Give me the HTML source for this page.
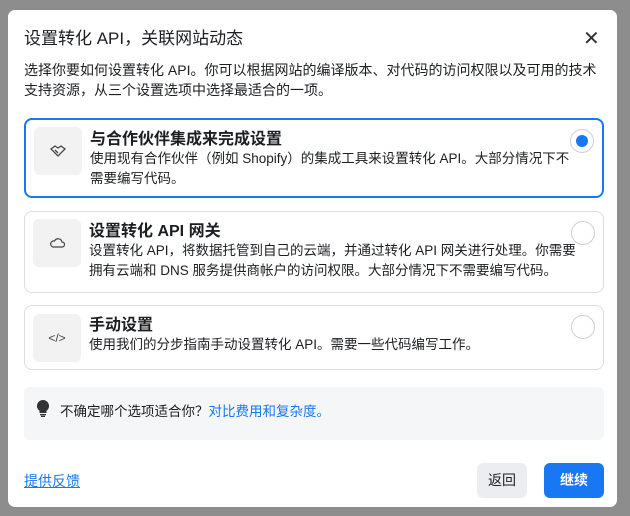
<!DOCTYPE html>
<html><head><meta charset="utf-8"><style>
*{margin:0;padding:0;box-sizing:border-box}
body{width:630px;height:516px;background:#8d8d8d;font-family:"Liberation Sans","Noto Sans CJK SC",sans-serif;color:#1c1e21;position:relative;overflow:hidden}
.m{position:absolute;left:8px;top:10px;width:609px;height:497px;background:#fff;border-radius:7px}
.t{position:absolute;left:24px;top:24px;font-size:17px;color:#1c1e21}
.x{position:absolute;left:583px;top:26px;font-size:20px;color:#333}
.d{position:absolute;left:24px;top:60px;width:580px;font-size:14px;line-height:20px;color:#1c1e21}
.c{position:absolute;left:24px;width:580px;border:1px solid #dadde1;border-radius:8px;background:#fff}
.c.s{border:2px solid #1877f2}
.ib{position:absolute;left:8px;top:7px;width:48px;height:48px;background:#f2f2f2;border-radius:6px;display:flex;align-items:center;justify-content:center}
.ct{position:absolute;left:64px;top:5px;font-size:16px;font-weight:bold}
.cd{position:absolute;left:64px;top:29px;width:496px;font-size:13.5px;line-height:20px}
.r{position:absolute;right:8px;top:9px;width:24px;height:24px;border:1px solid #ccd0d5;border-radius:50%}
.r.on::after{content:"";position:absolute;left:5px;top:5px;width:12px;height:12px;border-radius:50%;background:#1877f2}
.tip{position:absolute;left:24px;top:387px;width:580px;height:53px;background:#f5f6f7;border-radius:6px;font-size:13.5px;padding:13px 0 0 36px}
.tip a{color:#1877f2}
.fb{position:absolute;left:24px;top:471px;font-size:14px;color:#1877f2;text-decoration:underline}
.b1{position:absolute;left:477px;top:463px;width:50px;height:35px;background:#ebedf0;border-radius:6px;font-size:14px;text-align:center;line-height:35px}
.b2{position:absolute;left:544px;top:463px;width:60px;height:35px;background:#1877f2;border-radius:6px;font-size:14px;color:#fff;text-align:center;line-height:35px;font-weight:bold}
</style></head><body>
<div class="m"></div>
<div class="t">设置转化 API，关联网站动态</div>
<div class="x">✕</div>
<div class="d">选择你要如何设置转化 API。你可以根据网站的编译版本、对代码的访问权限以及可用的技术支持资源，从三个设置选项中选择最适合的一项。</div>
<div class="c s" style="top:118px;height:80px;left:24px">
<div class="ib"><svg width="16" height="14" viewBox="0 0 16 14" fill="none" stroke="#444" stroke-width="1.3"><path d="M1 5l4-3 3 2 3-2 4 3-7 7z M5 6l3 3"/></svg></div>
<div class="ct">与合作伙伴集成来完成设置</div>
<div class="cd" style="width:488px">使用现有合作伙伴（例如 Shopify）的集成工具来设置转化 API。大部分情况下不需要编写代码。</div>
<div class="r on"></div></div>
<div class="c" style="top:211px;height:82px">
<div class="ib"><svg width="16" height="12" viewBox="0 0 16 12" fill="none" stroke="#444" stroke-width="1.2"><path d="M4 10h9a2.5 2.5 0 000-5 4 4 0 00-7.5-1A3 3 0 004 10z"/></svg></div>
<div class="ct">设置转化 API 网关</div>
<div class="cd">设置转化 API，将数据托管到自己的云端，并通过转化 API 网关进行处理。你需要拥有云端和 DNS 服务提供商帐户的访问权限。大部分情况下不需要编写代码。</div>
<div class="r"></div></div>
<div class="c" style="top:305px;height:65px">
<div class="ib" style="top:8px"><span style="font-size:12px;color:#444">&lt;/&gt;</span></div>
<div class="ct">手动设置</div>
<div class="cd">使用我们的分步指南手动设置转化 API。需要一些代码编写工作。</div>
<div class="r"></div></div>
<div class="tip"><svg style="position:absolute;left:13px;top:13px" width="12" height="17" viewBox="0 0 12 17"><path d="M6 0a6 6 0 00-3.5 10.9V13h7v-2.1A6 6 0 006 0z" fill="#333"/><rect x="3" y="14" width="6" height="1.3" fill="#333"/><rect x="4" y="15.7" width="4" height="1.3" fill="#333"/></svg>不确定哪个选项适合你？<a>对比费用和复杂度。</a></div>
<div class="fb">提供反馈</div>
<div class="b1">返回</div>
<div class="b2">继续</div>
</body></html>
